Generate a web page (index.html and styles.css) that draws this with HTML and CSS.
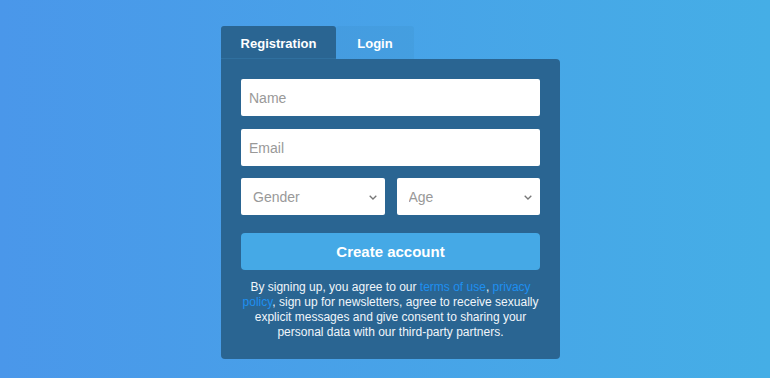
FILE: index.html
```html
<!DOCTYPE html>
<html lang="en">
<head>
    <meta charset="UTF-8">
    <title>Registration</title>
    <link rel="stylesheet" href="styles.css">
</head>
<body>
    <div class="wrap">
        <div class="box">
            <div class="tabs">
                <div class="tab active">Registration</div>
                <div class="tab login">Login</div>
            </div>
            <form class="card">
                <input type="text" placeholder="Name">
                <input type="email" placeholder="Email">
                <div class="row">
                    <div class="select">
                        <select>
                            <option>Gender</option>
                        </select>
                        <svg class="chev" width="8" height="5" viewBox="0 0 8 5"><path d="M0.7 0.7l3.3 3.3 3.3-3.3" fill="none" stroke="#777" stroke-width="1.3"/></svg>
                    </div>
                    <div class="select">
                        <select>
                            <option>Age</option>
                        </select>
                        <svg class="chev" width="8" height="5" viewBox="0 0 8 5"><path d="M0.7 0.7l3.3 3.3 3.3-3.3" fill="none" stroke="#777" stroke-width="1.3"/></svg>
                    </div>
                </div>
                <button type="submit">Create account</button>
                <p class="terms">By signing up, you agree to our <a href="#">terms of use</a>, <a href="#">privacy policy</a>, sign up for newsletters, agree to receive sexually explicit messages and give consent to sharing your personal data with our third-party partners.</p>
            </form>
        </div>
    </div>
</body>
</html>
```

FILE: styles.css
```css
html, body {
    margin: 0;
    padding: 0;
    height: 378px;
}
body {
    font-family: "Liberation Sans", Arial, sans-serif;
    background: linear-gradient(to right, #4a97ea, #45aee6);
    overflow: hidden;
}
.wrap {
    padding: 26px 0 0 221px;
}
.box {
    width: 339px;
}
.tabs {
    display: flex;
}
.tab {
    width: 115px;
    height: 33px;
    line-height: 36px;
    text-align: center;
    color: #fff;
    font-weight: bold;
    font-size: 13px;
    background: #2a6592;
    border-radius: 3px 3px 0 0;
}
.tab.active {
    border-bottom: 1px solid #30709f;
    height: 32px;
}
.tab.login {
    width: 78px;
    background: rgba(42, 100, 145, 0.08);
}
.card {
    background: #2a6592;
    border-radius: 0 4px 4px 4px;
    padding: 20px 20px 19px;
    display: flex;
    flex-direction: column;
}
input, select {
    height: 37px;
    border: none;
    border-radius: 2px;
    background: #fff;
    font-family: inherit;
    font-size: 14px;
    color: #999;
    padding: 0 8px;
    box-sizing: border-box;
    outline: none;
}
input {
    width: 100%;
    margin-bottom: 13px;
}
input::placeholder {
    color: #999;
}
.row {
    display: flex;
    gap: 12px;
    margin-top: -1px;
    margin-bottom: 18px;
}
.select {
    position: relative;
    flex: 1;
}
select {
    width: 100%;
    padding: 0 12px;
    -webkit-appearance: none;
    appearance: none;
}
.chev {
    position: absolute;
    right: 8px;
    top: 17px;
    pointer-events: none;
}
button {
    height: 37px;
    border: none;
    border-radius: 4px;
    background: #45a9e6;
    color: #fff;
    font-family: inherit;
    font-weight: bold;
    font-size: 15px;
    cursor: pointer;
}
.terms {
    margin: 10px 0 0;
    color: #f0f5fa;
    font-size: 12px;
    line-height: 15px;
    text-align: center;
}
.terms a {
    color: #1e8ff0;
    text-decoration: none;
}
```
